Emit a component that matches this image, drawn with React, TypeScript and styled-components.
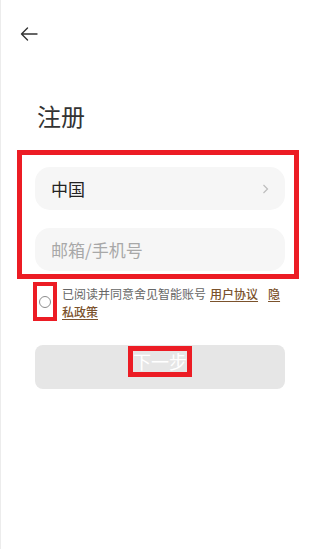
import React from "react";
import styled, { createGlobalStyle } from "styled-components";

const GlobalStyle = createGlobalStyle`
  html, body {
    margin: 0;
    padding: 0;
    background: #ffffff;
  }
  body {
    font-family: "Noto Sans CJK SC", "Noto Sans", sans-serif;
    color: #333333;
  }
  * {
    box-sizing: border-box;
  }
`;

const MARK = "#ec1c24";

const Page = styled.div`
  width: 320px;
  height: 549px;
  background: #ffffff;
  box-shadow: inset 1px 0 0 #ececec;
  display: flex;
  flex-direction: column;
  align-items: flex-start;
`;

const Header = styled.div`
  padding: 27px 0 0 20px;
  height: 41px;
  svg {
    display: block;
  }
`;

const Title = styled.h1`
  margin: 59px 0 0 37px;
  font-size: 24px;
  line-height: 32px;
  font-weight: 400;
  color: #333333;
`;

const Frame = styled.div`
  margin: 18px 0 0 17px;
  width: 282px;
  border: 5px solid ${MARK};
  padding: 12px 9px 3px 13px;
  display: flex;
  flex-direction: column;
  gap: 18px;
`;

const Field = styled.div<{ $muted?: boolean }>`
  height: 43px;
  border-radius: 15px;
  background: #f6f6f6;
  padding: 0 16px;
  display: flex;
  align-items: center;
  justify-content: space-between;
  font-size: 17px;
  color: ${(p) => (p.$muted ? "#a8a8a8" : "#222222")};
`;

const Agreement = styled.div`
  margin: 3px 0 0 33px;
  display: flex;
  gap: 5px;
`;

const CheckFrame = styled.div`
  width: 24px;
  height: 39px;
  border: 4px solid ${MARK};
  display: flex;
  align-items: center;
  justify-content: center;
`;

const Circle = styled.span`
  width: 12px;
  height: 12px;
  border-radius: 50%;
  border: 1px solid #8c8c8c;
  margin-top: 1px;
`;

const AgreeText = styled.p`
  margin: 3px 0 0;
  width: 223px;
  font-size: 12px;
  line-height: 18px;
  color: #666666;
`;

const Link = styled.a<{ $gap?: boolean }>`
  color: #7b522c;
  font-weight: 500;
  text-decoration: underline;
  text-underline-offset: 2px;
  margin-left: ${(p) => (p.$gap ? "10px" : "4px")};
`;

const NextButton = styled.button`
  margin: 24px 0 0 35px;
  width: 250px;
  height: 44px;
  border: none;
  border-radius: 8px;
  background: #e6e6e6;
  display: flex;
  align-items: center;
  justify-content: center;
  padding: 0;
  font-family: inherit;
`;

const ButtonLabel = styled.span`
  border: 5px solid ${MARK};
  margin-bottom: 11px;
  font-size: 18px;
  line-height: 21px;
  color: #ffffff;
  width: 64px;
  text-align: center;
`;

const Chevron = () => (
  <svg width="7" height="10" viewBox="0 0 7 10" fill="none">
    <path d="M1.5 1 L5.5 5 L1.5 9" stroke="#bdbdbd" strokeWidth="1.2" />
  </svg>
);

const BackArrow = () => (
  <svg width="18" height="14" viewBox="0 0 18 14" fill="none">
    <path
      d="M17 7 H1.5 M7.5 1 L1.5 7 L7.5 13"
      stroke="#333333"
      strokeWidth="1.4"
      strokeLinecap="round"
      strokeLinejoin="round"
    />
  </svg>
);

export default function App() {
  return (
    <>
      <GlobalStyle />
      <Page>
        <Header>
          <BackArrow />
        </Header>
        <Title>注册</Title>
        <Frame>
          <Field>
            <span>中国</span>
            <Chevron />
          </Field>
          <Field $muted>邮箱/手机号</Field>
        </Frame>
        <Agreement>
          <CheckFrame>
            <Circle />
          </CheckFrame>
          <AgreeText>
            已阅读并同意舍见智能账号
            <Link>用户协议</Link>
            <Link $gap>隐私政策</Link>
          </AgreeText>
        </Agreement>
        <NextButton>
          <ButtonLabel>下一步</ButtonLabel>
        </NextButton>
      </Page>
    </>
  );
}
